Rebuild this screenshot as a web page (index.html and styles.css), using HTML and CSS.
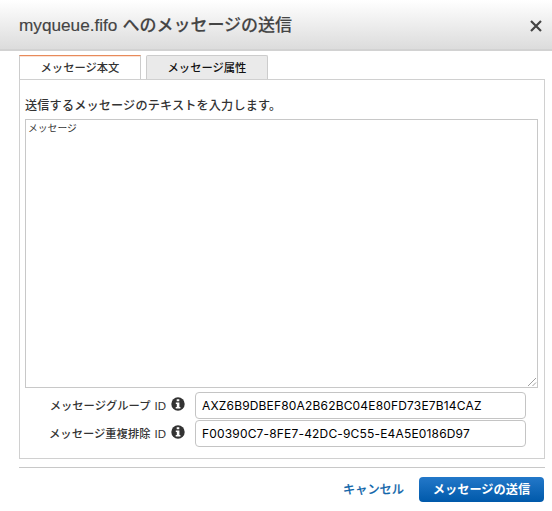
FILE: index.html
```
<!DOCTYPE html>
<html lang="ja">
<head>
<meta charset="utf-8">
<title>myqueue.fifo へのメッセージの送信</title>
<link rel="stylesheet" href="styles.css">
</head>
<body>
<div class="dialog">
  <header class="header">
    <h1 class="title"><span class="queue">myqueue.fifo</span><span>へのメッセージの送信</span></h1>
    <svg class="close" viewBox="0 0 14 14"><path d="M2 2L12 12M12 2L2 12"/></svg>
  </header>
  <nav class="tabs">
    <div class="tab active">メッセージ本文</div>
    <div class="tab">メッセージ属性</div>
  </nav>
  <main class="panel">
    <p class="prompt">送信するメッセージのテキストを入力します。</p>
    <div class="message">メッセージ<svg class="grip" viewBox="0 0 10 10"><path d="M1 9L9 1M5.5 9L9 5.5"/></svg></div>
    <div class="row">
      <div class="label"><span>メッセージグループ</span><span class="id">ID</span></div>
      <svg class="info" viewBox="0 0 14 14"><circle cx="7" cy="7" r="6.7"/><path d="M5.7 2.2h2.6v2H5.7zM4.8 5.4h3.6v4.5h1v1.5H4.7V9.9h1.1V6.9h-1z"/></svg>
      <div class="input">AXZ6B9DBEF80A2B62BC04E80FD73E7B14CAZ</div>
    </div>
    <div class="row">
      <div class="label"><span>メッセージ重複排除</span><span class="id">ID</span></div>
      <svg class="info" viewBox="0 0 14 14"><circle cx="7" cy="7" r="6.7"/><path d="M5.7 2.2h2.6v2H5.7zM4.8 5.4h3.6v4.5h1v1.5H4.7V9.9h1.1V6.9h-1z"/></svg>
      <div class="input">F00390C7-8FE7-42DC-9C55-E4A5E0186D97</div>
    </div>
  </main>
  <footer class="footer">
    <div class="cancel">キャンセル</div>
    <div class="send">メッセージの送信</div>
  </footer>
</div>
</body>
</html>
```
FILE: styles.css
```
* { box-sizing: border-box; }
body {
  margin: 0;
  background: #fff;
  color: #333;
  font-family: "Liberation Sans", "Noto Sans CJK JP", sans-serif;
  white-space: nowrap;
}
.dialog { width: 552px; height: 511px; overflow: hidden; }
.header {
  display: flex;
  align-items: center;
  justify-content: space-between;
  height: 51px;
  padding: 1px 9px 0 19px;
  background: linear-gradient(#fff, #dcdcdc);
  border-bottom: 2px solid #d2d2d2;
}
.title {
  display: flex;
  align-items: baseline;
  gap: 5px;
  margin: 0;
  font-size: 17px;
  font-weight: 500;
  line-height: 24px;
  color: #444;
  -webkit-text-stroke: 0.15px #444;
}
.queue { font-size: 17.2px; }
.close { width: 14px; height: 14px; margin-top: 2px; fill: none; stroke: #444; stroke-width: 2.2; }
.tabs { display: flex; gap: 5px; margin: 4px 0 0 19px; }
.tab {
  width: 122px;
  height: 24px;
  border: 1px solid #ccc;
  border-bottom: 0;
  border-radius: 2px 2px 0 0;
  background: #eaeaea;
  color: #111;
  font-size: 11.3px;
  font-weight: 500;
  line-height: 24px;
  text-align: center;
}
.tab.active {
  background: #fff;
  color: #333;
  border-top-color: #e88a5a;
  border-radius: 0;
  box-shadow: inset 0 1px #fbe3d6;
}
.panel {
  width: 526px;
  height: 380px;
  margin-left: 19px;
  padding: 14px 6px 0 5px;
  border: 1px solid #d0d0d0;
}
.prompt {
  margin: 0;
  height: 25px;
  font-size: 12.1px;
  font-weight: 500;
  letter-spacing: 0.2px;
  line-height: 24px;
}
.message {
  position: relative;
  width: 513px;
  height: 269px;
  padding: 1px 2px;
  border: 1px solid #c8c8c8;
  font-size: 9.8px;
  line-height: 16px;
}
.grip { position: absolute; right: 0; bottom: 0; width: 10px; height: 10px; fill: none; stroke: #888; stroke-width: 0.8; }
.row { display: flex; align-items: center; height: 28px; }
.message + .row { margin-top: 3px; }
.label {
  display: flex;
  gap: 4px;
  width: 141px;
  padding-top: 1px;
  justify-content: flex-end;
  font-size: 11.3px;
  font-weight: 500;
  line-height: 20px;
}
.id { font-size: 11.5px; }
.info { width: 14px; height: 14px; margin: -2px 10px 0 5px; fill: #333; }
.info path { fill: #fff; }
.input {
  width: 331px;
  height: 27px;
  padding-left: 6px;
  border: 1px solid #c4c4c4;
  border-radius: 4px;
  color: #000;
  font-family: Inter, sans-serif;
  font-size: 12px;
  letter-spacing: 0.17px;
  line-height: 26px;
}
.footer {
  display: flex;
  justify-content: flex-end;
  width: 526px;
  margin: 8px 0 0 19px;
  padding: 9px 1px 0 0;
  border-top: 1px solid #c8c8c8;
  font-size: 12.2px;
  font-weight: 700;
  line-height: 26px;
}
.cancel { margin-right: 15px; color: #1166aa; font-weight: 500; -webkit-text-stroke: 0.15px #1166aa; }
.send {
  width: 125px;
  height: 25px;
  border-radius: 4px;
  background: linear-gradient(#2378c9, #0059aa);
  color: #fff;
  text-align: center;
}
```
